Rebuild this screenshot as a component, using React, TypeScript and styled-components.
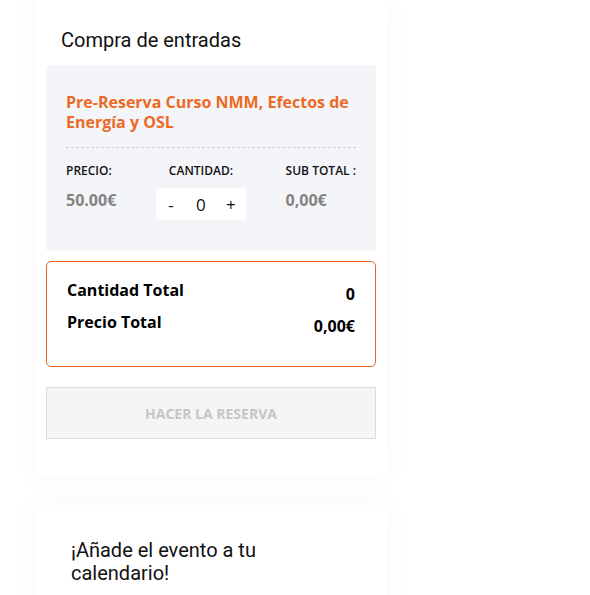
import React, { ReactElement, useState } from "react";
import styled, { createGlobalStyle } from "styled-components";

const GlobalStyle = createGlobalStyle`
    body {
        margin: 0;
        background: #ffffff;
        font-family: "Open Sans", "Liberation Sans", sans-serif;
        color: #111;
        overflow: hidden;
    }
`;

const Page = styled.div`
    width: 590px;
    box-sizing: border-box;
    display: flex;
    flex-direction: column;
    gap: 30px;
    padding-left: 35px;
`;

const Card = styled.div`
    width: 352px;
    box-sizing: border-box;
    background: #fff;
    box-shadow: 0 0 28px rgba(0, 0, 0, 0.035);
    padding: ${(props: any) => props.pad || "0"};
`;

const Heading = styled.h2`
    margin: 0;
    font-family: Roboto, "Open Sans", sans-serif;
    font-weight: 400;
    font-size: 20px;
    line-height: 23px;
    color: #111;
    max-width: ${(props: any) => props.narrow ? "215px" : "none"};
    padding-left: ${(props: any) => props.narrow ? "25px" : "15px"};
`;

const TicketBox = styled.div`
    margin-top: 13px;
    background: #f4f5f9;
    border-radius: 4px;
    padding: 27px 20px 31px;
`;

const TicketTitle = styled.div`
    font-size: 16px;
    font-weight: 700;
    line-height: 20px;
    color: #ec6a25;
`;

const Dashed = styled.hr`
    border: none;
    border-top: 1px dashed #cfd0d6;
    margin: 15px 0 15px;
`;

const Columns = styled.div`
    display: flex;
    justify-content: space-between;
`;

const Column = styled.div`
    display: flex;
    flex-direction: column;
    align-items: ${(props: any) => props.center ? "center" : "flex-start"};
`;

const Label = styled.span`
    font-size: 12px;
    font-weight: 600;
    line-height: 16px;
    color: #111;
    white-space: nowrap;
`;

const Value = styled.span`
    margin-top: 10px;
    font-size: 16px;
    line-height: 22px;
    font-weight: 700;
    color: #838383;
`;

const Counter = styled.div`
    margin-top: 9px;
    width: 90px;
    height: 32px;
    background: #fff;
    border-radius: 3px;
    display: flex;
    align-items: center;
    justify-content: space-between;
    padding: 0 9px;
    box-sizing: border-box;
    font-size: 17px;
    color: #111;
`;

const CounterButton = styled.span`
    width: 12px;
    text-align: center;
    cursor: pointer;
`;

const TotalsBox = styled.div`
    margin-top: 10px;
    border: 1px solid #e8671f;
    border-radius: 5px;
    padding: 18px 20px 26px;
    display: flex;
    flex-direction: column;
    gap: 4px;
`;

const TotalRow = styled.div`
    display: flex;
    justify-content: space-between;
    align-items: flex-start;
    font-size: 16px;
    font-weight: 700;
    color: #000;
`;

const TotalLabel = styled.span`
    line-height: 20px;
`;

const TotalValue = styled.span`
    line-height: 28px;
`;

const ReserveButton = styled.button`
    display: block;
    margin-top: 20px;
    width: 100%;
    height: 52px;
    box-sizing: border-box;
    background: #f5f5f5;
    border: 1px solid #dcdcdc;
    font-family: "Open Sans", sans-serif;
    font-size: 14px;
    font-weight: 700;
    color: #c6c6c6;
    cursor: not-allowed;
`;

const Inner = styled.div`
    padding: 0 11px;
`;

export default function App(): ReactElement {
    const [qty, setQty] = useState<number>(0);
    const price = 50;
    const sub = (qty * price).toFixed(2).replace(".", ",") + "€";

    return (
        <>
            <GlobalStyle />
            <Page>
                <Card pad="29px 0 36px">
                    <Inner>
                        <Heading>Compra de entradas</Heading>
                        <TicketBox>
                            <TicketTitle>Pre-Reserva Curso NMM, Efectos de Energía y OSL</TicketTitle>
                            <Dashed />
                            <Columns>
                                <Column>
                                    <Label>PRECIO:</Label>
                                    <Value>50.00€</Value>
                                </Column>
                                <Column center>
                                    <Label>CANTIDAD:</Label>
                                    <Counter>
                                        <CounterButton onClick={() => setQty(q => Math.max(0, q - 1))}>-</CounterButton>
                                        <span>{qty}</span>
                                        <CounterButton onClick={() => setQty(q => q + 1)}>+</CounterButton>
                                    </Counter>
                                </Column>
                                <Column>
                                    <Label>SUB TOTAL :</Label>
                                    <Value>{sub}</Value>
                                </Column>
                            </Columns>
                        </TicketBox>
                        <TotalsBox>
                            <TotalRow>
                                <TotalLabel>Cantidad Total</TotalLabel>
                                <TotalValue>{qty}</TotalValue>
                            </TotalRow>
                            <TotalRow>
                                <TotalLabel>Precio Total</TotalLabel>
                                <TotalValue>{sub}</TotalValue>
                            </TotalRow>
                        </TotalsBox>
                        <ReserveButton disabled={qty === 0}>HACER LA RESERVA</ReserveButton>
                    </Inner>
                </Card>
                <Card pad="34px 11px 40px">
                    <Heading narrow>¡Añade el evento a tu calendario!</Heading>
                </Card>
            </Page>
        </>
    );
}
